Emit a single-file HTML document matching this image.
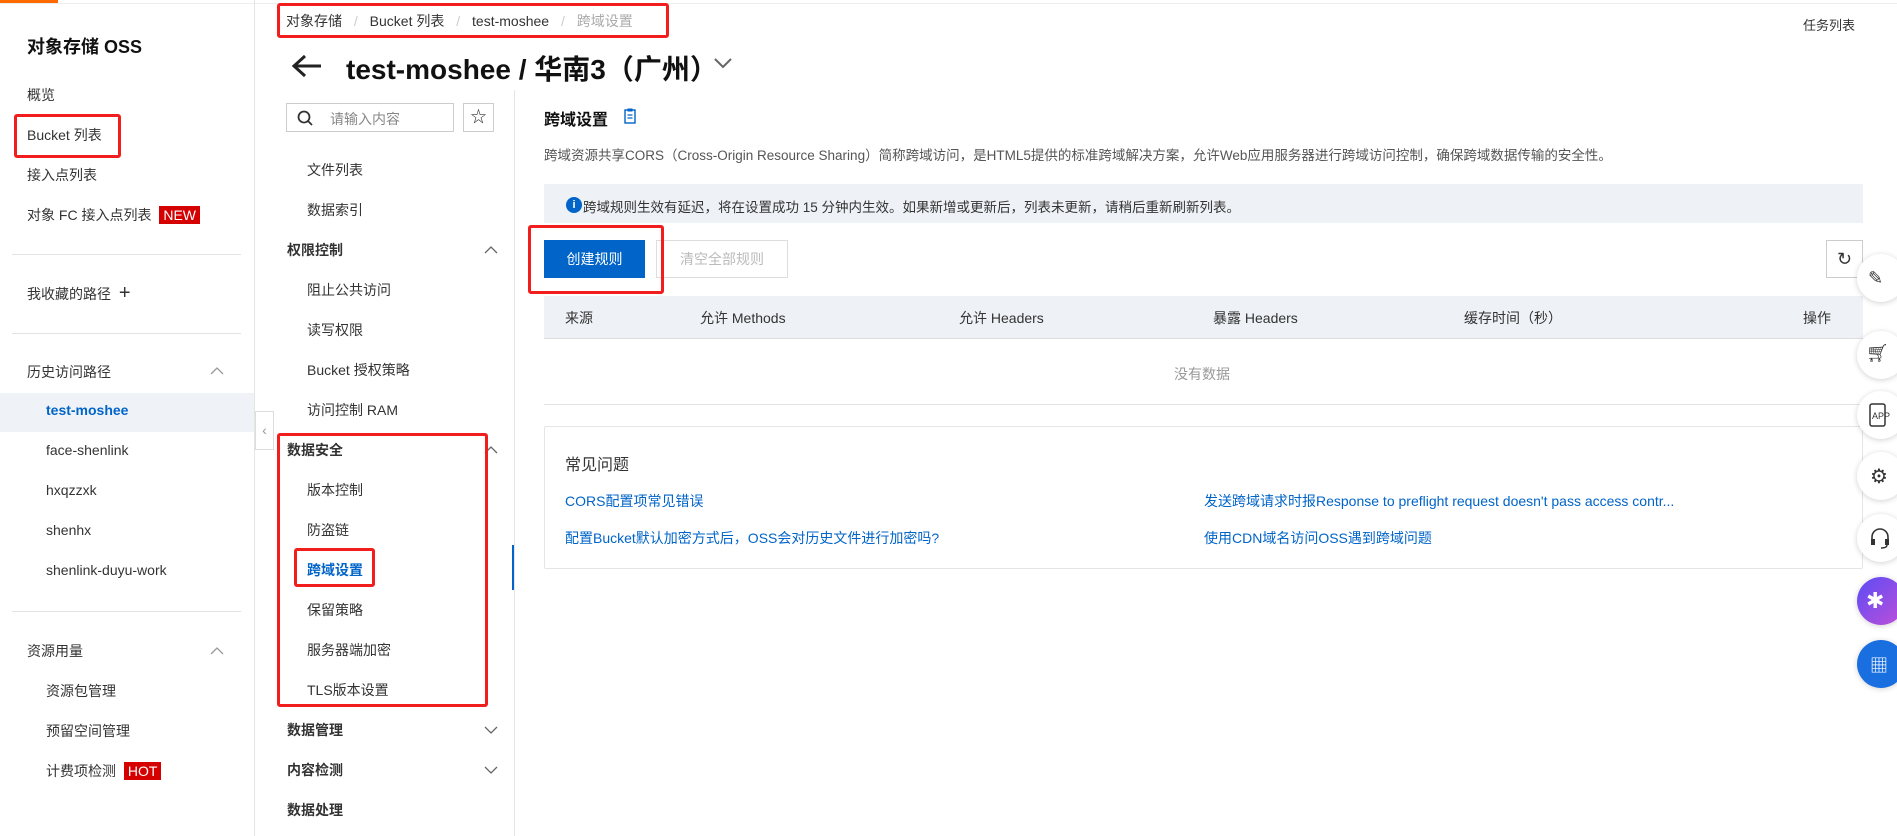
<!DOCTYPE html>
<html><head><meta charset="utf-8"><style>
*{box-sizing:border-box;margin:0;padding:0}
body{width:1897px;height:836px;overflow:hidden;background:#fff;font-family:"Liberation Sans","Noto Sans CJK SC",sans-serif;font-size:14px;color:#333;position:relative}
.a{position:absolute;white-space:nowrap}
.red{position:absolute;border:3px solid #f21d1d;border-radius:3px}
.blue{color:#0064c8}
.sb{position:absolute;left:0;top:0;width:255px;height:836px;border-right:1px solid #e5e5e5}
.hr{position:absolute;height:1px;background:#e3e3e3}
.nav2{position:absolute;left:255px;top:90px;width:260px;height:746px;border-right:1px solid #e5e5e5}
.circ{position:absolute;left:1857px;width:48px;height:48px;border-radius:50%;background:#fff;box-shadow:0 1px 6px rgba(0,0,0,.18)}
.chv{position:absolute;left:484px}
</style></head><body>
<div class="a" style="left:0;top:0;width:58px;height:3px;background:#ff6a00"></div>
<div class="a" style="left:0;top:3px;width:1897px;height:1px;background:#eee"></div>
<div class="sb"></div>
<div class="a" style="left:27px;top:33px;font-size:18px;font-weight:bold;color:#111">对象存储 OSS</div>
<div class="a" style="left:27px;top:85px">概览</div>
<div class="a" style="left:27px;top:125px">Bucket 列表</div>
<div class="red" style="left:14px;top:114px;width:107px;height:44px"></div>
<div class="a" style="left:27px;top:165px">接入点列表</div>
<div class="a" style="left:27px;top:205px">对象 FC 接入点列表 <span style="background:#d50000;color:#fff;padding:1px 4px;margin-left:4px">NEW</span></div>
<div class="hr" style="left:12px;top:254px;width:229px"></div>
<div class="a" style="left:27px;top:284px">我收藏的路径 <span style="font-size:20px;line-height:14px;margin-left:4px">+</span></div>
<div class="hr" style="left:12px;top:333px;width:229px"></div>
<div class="a" style="left:27px;top:362px">历史访问路径</div>
<svg class="a" style="left:210px;top:367px" width="14" height="8"><path d="M1 7l6-6 6 6" fill="none" stroke="#999" stroke-width="1.3"/></svg>
<div class="a" style="left:0;top:393px;width:254px;height:39px;background:#eff3f8"></div>
<div class="a blue" style="left:46px;top:402px;font-weight:bold">test-moshee</div>
<div class="a" style="left:46px;top:442px">face-shenlink</div>
<div class="a" style="left:46px;top:482px">hxqzzxk</div>
<div class="a" style="left:46px;top:522px">shenhx</div>
<div class="a" style="left:46px;top:562px">shenlink-duyu-work</div>
<div class="hr" style="left:12px;top:611px;width:229px"></div>
<div class="a" style="left:27px;top:641px">资源用量</div>
<svg class="a" style="left:210px;top:647px" width="14" height="8"><path d="M1 7l6-6 6 6" fill="none" stroke="#999" stroke-width="1.3"/></svg>
<div class="a" style="left:46px;top:681px">资源包管理</div>
<div class="a" style="left:46px;top:721px">预留空间管理</div>
<div class="a" style="left:46px;top:761px">计费项检测 <span style="background:#d50000;color:#fff;padding:1px 4px;margin-left:4px">HOT</span></div>

<div class="a" style="left:286px;top:11px;color:#333">对象存储 <span style="color:#ccc;margin:0 8px">/</span> Bucket 列表 <span style="color:#ccc;margin:0 8px">/</span> test-moshee <span style="color:#ccc;margin:0 8px">/</span> <span style="color:#aaa">跨域设置</span></div>
<div class="red" style="left:277px;top:3px;width:392px;height:35px"></div>
<div class="a" style="left:1803px;top:15px;font-size:13px">任务列表</div>
<svg class="a" style="left:291px;top:53px" width="32" height="26" viewBox="0 0 32 26"><path d="M30 13H4M14 3L3 13l11 10" fill="none" stroke="#222" stroke-width="3"/></svg>
<div class="a" style="left:346px;top:48px;font-size:28px;font-weight:bold;color:#111">test-moshee / 华南3（广州）</div>
<svg class="a" style="left:713px;top:57px" width="20" height="12"><path d="M2 2l8 8 8-8" fill="none" stroke="#666" stroke-width="2"/></svg>

<div class="nav2"></div>
<div class="a" style="left:286px;top:103px;width:168px;height:29px;border:1px solid #ccc"></div>
<svg class="a" style="left:297px;top:110px" width="16" height="16"><circle cx="7" cy="7" r="5.5" fill="none" stroke="#333" stroke-width="1.8"/><path d="M11 11l4 4" stroke="#333" stroke-width="1.8"/></svg>
<div class="a" style="left:330px;top:109px;color:#888">请输入内容</div>
<div class="a" style="left:463px;top:103px;width:31px;height:29px;border:1px solid #ccc;text-align:center;line-height:27px;font-size:16px">☆</div>
<div class="a" style="left:307px;top:160px">文件列表</div>
<div class="a" style="left:307px;top:200px">数据索引</div>
<div class="a" style="left:287px;top:240px;font-weight:bold">权限控制</div>
<svg class="chv" style="top:246px" width="14" height="8"><path d="M1 7l6-6 6 6" fill="none" stroke="#666" stroke-width="1.3"/></svg>
<div class="a" style="left:307px;top:280px">阻止公共访问</div>
<div class="a" style="left:307px;top:320px">读写权限</div>
<div class="a" style="left:307px;top:360px">Bucket 授权策略</div>
<div class="a" style="left:307px;top:400px">访问控制 RAM</div>
<div class="a" style="left:287px;top:440px;font-weight:bold">数据安全</div>
<svg class="chv" style="top:446px" width="14" height="8"><path d="M1 7l6-6 6 6" fill="none" stroke="#666" stroke-width="1.3"/></svg>
<div class="a" style="left:307px;top:480px">版本控制</div>
<div class="a" style="left:307px;top:520px">防盗链</div>
<div class="a blue" style="left:307px;top:560px;font-weight:bold">跨域设置</div>
<div class="a" style="left:307px;top:600px">保留策略</div>
<div class="a" style="left:307px;top:640px">服务器端加密</div>
<div class="a" style="left:307px;top:680px">TLS版本设置</div>
<div class="a" style="left:287px;top:720px;font-weight:bold">数据管理</div>
<svg class="chv" style="top:726px" width="14" height="8"><path d="M1 1l6 6 6-6" fill="none" stroke="#666" stroke-width="1.3"/></svg>
<div class="a" style="left:287px;top:760px;font-weight:bold">内容检测</div>
<svg class="chv" style="top:766px" width="14" height="8"><path d="M1 1l6 6 6-6" fill="none" stroke="#666" stroke-width="1.3"/></svg>
<div class="a" style="left:287px;top:800px;font-weight:bold">数据处理</div>
<div class="red" style="left:277px;top:433px;width:211px;height:274px"></div>
<div class="red" style="left:294px;top:548px;width:81px;height:39px"></div>
<div class="a" style="left:255px;top:411px;width:19px;height:39px;border:1px solid #ddd;background:#fff;color:#999;text-align:center;line-height:37px">‹</div>
<div class="a" style="left:512px;top:545px;width:2px;height:45px;background:#0064c8"></div>

<div class="a" style="left:544px;top:106px;font-size:16px;font-weight:bold;color:#111">跨域设置</div>
<svg class="a" style="left:624px;top:108px" width="12" height="16"><rect x="1" y="2" width="10" height="13" fill="none" stroke="#0064c8" stroke-width="1.4"/><rect x="3.5" y="0.5" width="5" height="3" fill="#0064c8"/><path d="M3.5 7h5M3.5 10h5" stroke="#0064c8" stroke-width="1.2"/></svg>
<div class="a" style="left:544px;top:144px;font-size:13.5px;color:#555">跨域资源共享CORS（Cross-Origin Resource Sharing）简称跨域访问，是HTML5提供的标准跨域解决方案，允许Web应用服务器进行跨域访问控制，确保跨域数据传输的安全性。</div>
<div class="a" style="left:544px;top:184px;width:1319px;height:39px;background:#eef1f6"></div>
<div class="a" style="left:566px;top:197px;width:16px;height:16px;border-radius:50%;background:#0064c8;color:#fff;font-size:11px;text-align:center;line-height:16px;font-weight:bold">i</div>
<div class="a" style="left:583px;top:196px;font-size:13.5px">跨域规则生效有延迟，将在设置成功 15 分钟内生效。如果新增或更新后，列表未更新，请稍后重新刷新列表。</div>
<div class="a" style="left:544px;top:240px;width:101px;height:38px;background:#0064c8;color:#fff;text-align:center;line-height:38px">创建规则</div>
<div class="a" style="left:656px;top:240px;width:132px;height:38px;border:1px solid #ddd;color:#bbb;text-align:center;line-height:36px">清空全部规则</div>
<div class="red" style="left:528px;top:225px;width:136px;height:69px"></div>
<div class="a" style="left:1826px;top:240px;width:37px;height:38px;border:1px solid #ccc;text-align:center;line-height:36px;font-size:18px">↻</div>
<div class="a" style="left:544px;top:296px;width:1319px;height:43px;background:#eef1f6;border-bottom:1px solid #ddd"></div>
<div class="a" style="left:565px;top:308px">来源</div>
<div class="a" style="left:700px;top:308px">允许 Methods</div>
<div class="a" style="left:959px;top:308px">允许 Headers</div>
<div class="a" style="left:1213px;top:308px">暴露 Headers</div>
<div class="a" style="left:1464px;top:308px">缓存时间（秒）</div>
<div class="a" style="left:1803px;top:308px">操作</div>
<div class="a" style="left:1174px;top:364px;color:#999">没有数据</div>
<div class="hr" style="left:544px;top:404px;width:1319px"></div>
<div class="a" style="left:544px;top:426px;width:1319px;height:143px;border:1px solid #e5e5e5;border-radius:2px"></div>
<div class="a" style="left:565px;top:451px;font-size:16px">常见问题</div>
<div class="a blue" style="left:565px;top:491px">CORS配置项常见错误</div>
<div class="a blue" style="left:1204px;top:491px">发送跨域请求时报Response to preflight request doesn't pass access contr...</div>
<div class="a blue" style="left:565px;top:528px">配置Bucket默认加密方式后，OSS会对历史文件进行加密吗?</div>
<div class="a blue" style="left:1204px;top:528px">使用CDN域名访问OSS遇到跨域问题</div>

<div class="circ" style="top:254px"></div>
<div class="circ" style="top:331px"></div>
<div class="circ" style="top:391px"></div>
<div class="circ" style="top:452px"></div>
<div class="circ" style="top:514px"></div>
<div class="circ" style="top:577px;background:linear-gradient(135deg,#5b4cf5,#c04fd8)"></div>
<div class="circ" style="top:640px;background:#1a6fe0"></div>
<div class="a" style="left:1868px;top:268px;font-size:18px;color:#333">✎</div>
<div class="a" style="left:1866px;top:343px;font-size:18px;color:#333">🛒&#xFE0E;</div>
<svg class="a" style="left:1868px;top:403px" width="22" height="24"><rect x="2" y="1" width="15" height="22" rx="2" fill="none" stroke="#333" stroke-width="1.5"/><text x="4" y="16" font-size="9" font-family="Liberation Sans" fill="#333">APP</text></svg>
<div class="a" style="left:1870px;top:464px;font-size:20px;color:#333">⚙</div>
<svg class="a" style="left:1869px;top:527px" width="22" height="22"><path d="M3 13V10a8 8 0 0116 0v3" fill="none" stroke="#333" stroke-width="1.6"/><rect x="2" y="12" width="4" height="6" fill="#333"/><rect x="16" y="12" width="4" height="6" fill="#333"/><path d="M18 18q0 3-6 3" fill="none" stroke="#333" stroke-width="1.4"/></svg>
<div class="a" style="left:1866px;top:588px;font-size:22px;color:#fff">✱</div>
<div class="a" style="left:1870px;top:652px;font-size:18px;color:#fff">▦</div>
</body></html>
